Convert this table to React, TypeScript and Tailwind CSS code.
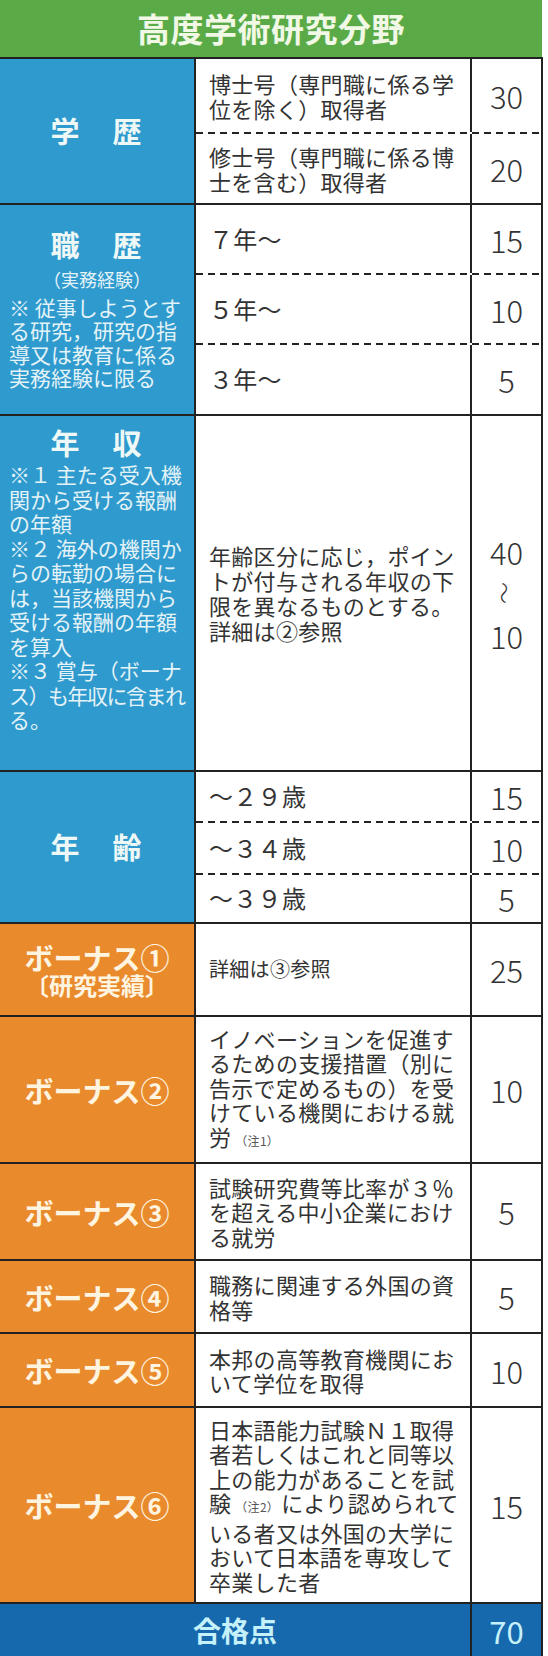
import type { ReactNode } from "react";

const font = "font-['Noto_Sans_CJK_JP','Noto_Sans_CJK_SC',sans-serif]";

// dashed divider spanning the text + points columns
function Dash() {
  return (
    <div className="h-[2px] w-full bg-[linear-gradient(to_right,#222_7px,transparent_7px)] bg-[length:12px_2px] bg-repeat-x" />
  );
}

function Cell({ h, text, size = "text-[22px]", value }: { h: string; text: ReactNode; size?: string; value: ReactNode }) {
  return (
    <div className={`flex ${h}`}>
      <div className={`w-[276px] border-r-2 border-[#222] pl-[13px] flex items-center whitespace-nowrap ${size} leading-[24.5px] tracking-[0.3px] text-[#333]`}>
        <div>{text}</div>
      </div>
      <div className="flex-1 flex items-center justify-center text-[31px] font-light text-[#333] leading-none">{value}</div>
    </div>
  );
}

function Row({ left, color, children }: { left: ReactNode; color: string; children: ReactNode }) {
  return (
    <div className="flex border-t-2 border-r-2 border-[#222] w-[543px]">
      <div className={`w-[196px] shrink-0 border-r-2 border-[#222] flex flex-col ${color}`}>{left}</div>
      <div className="flex-1 flex flex-col bg-white">{children}</div>
    </div>
  );
}

function Bonus({ n, sub }: { n: string; sub?: string }) {
  return (
    <div className="flex-1 flex flex-col items-center justify-center text-[#fff4e0] font-bold">
      <div className="text-[29px] leading-[30px]">ボーナス{n}</div>
      {sub && <div className="text-[24px] leading-[26px]">{sub}</div>}
    </div>
  );
}

const Note = ({ children }: { children: ReactNode }) => <span className="text-[12px] text-[#555] ml-[4px] mr-[2px]">{children}</span>;

export default function App() {
  return (
    <div className={`w-[548px] h-[1656px] bg-white overflow-hidden ${font}`}>
      {/* title */}
      <div className="h-[57px] w-[542px] bg-[#5aab48] flex items-center justify-center text-[33px] font-bold text-[#f1f8e6] tracking-[0.5px]">
        高度学術研究分野
      </div>

      {/* 学歴 */}
      <Row color="bg-[#2f9acd]" left={<div className="flex-1 flex items-center justify-center text-[29px] font-bold text-[#eef8f6] tracking-[2px]">学　歴</div>}>
        <Cell h="h-[73px]" size="text-[22px] leading-[23.5px]" text={<>博士号（専門職に係る学<br />位を除く）取得者</>} value="30" />
        <Dash />
        <Cell h="h-[69px]" text={<>修士号（専門職に係る博<br />士を含む）取得者</>} value="20" />
      </Row>

      {/* 職歴 */}
      <Row
        color="bg-[#2f9acd]"
        left={
          <div className="flex-1 flex flex-col justify-center pb-[4px] text-[#e4f3f8]">
            <div className="h-[38px] flex items-center justify-center text-[29px] font-bold text-[#eef8f6] tracking-[2px]">職　歴</div>
            <div className="h-[32px] flex items-center justify-center text-[18px]">（実務経験）</div>
            <div className="pl-[9px] text-[21px] leading-[23.5px] whitespace-nowrap">
              ※ 従事しようとす<br />る研究，研究の指<br />導又は教育に係る<br />実務経験に限る
            </div>
          </div>
        }
      >
        <Cell h="h-[68px]" size="text-[24px]" text="７年～" value="15" />
        <Dash />
        <Cell h="h-[68px]" size="text-[24px]" text="５年～" value="10" />
        <Dash />
        <Cell h="h-[69px]" size="text-[24px]" text="３年～" value="5" />
      </Row>

      {/* 年収 */}
      <Row
        color="bg-[#2f9acd]"
        left={
          <div className="flex-1 flex flex-col pt-[8px] text-[#e4f3f8]">
            <div className="h-[38px] flex items-center justify-center text-[29px] font-bold text-[#eef8f6] tracking-[2px]">年　収</div>
            <div className="pl-[9px] text-[21px] leading-[24.5px] whitespace-nowrap">
              ※１ 主たる受入機<br />関から受ける報酬<br />の年額<br />※２ 海外の機関か<br />らの転勤の場合に<br />は，当該機関から<br />受ける報酬の年額<br />を算入<br />※３ 賞与（ボーナ<br />
              <span className="tracking-[-1.5px]">ス）も年収に含まれ</span><br />る。
            </div>
          </div>
        }
      >
        <div className="flex h-[354px]">
          <div className="w-[276px] border-r-2 border-[#222] pl-[13px] flex items-center whitespace-nowrap text-[22px] leading-[25px] tracking-[0.3px] text-[#333]">
            <div>
              年齢区分に応じ，ポイン<br />トが付与される年収の下<br />限を異なるものとする。<br />詳細は②参照
            </div>
          </div>
          <div className="flex-1 flex flex-col items-center justify-center text-[31px] font-light text-[#333] leading-none">
            <div className="h-[42px] flex items-center">40</div>
            <div className="h-[42px] flex items-center text-[22px] rotate-90">～</div>
            <div className="h-[42px] flex items-center">10</div>
          </div>
        </div>
      </Row>

      {/* 年齢 */}
      <Row color="bg-[#2f9acd]" left={<div className="flex-1 flex items-center justify-center text-[29px] font-bold text-[#eef8f6] tracking-[2px]">年　齢</div>}>
        <Cell h="h-[49px]" size="text-[24px]" text="～２９歳" value="15" />
        <Dash />
        <Cell h="h-[50px]" size="text-[24px]" text="～３４歳" value="10" />
        <Dash />
        <Cell h="h-[47px]" size="text-[24px]" text="～３９歳" value="5" />
      </Row>

      {/* ボーナス */}
      <Row color="bg-[#e98a2c]" left={<Bonus n="①" sub="〔研究実績〕" />}>
        <Cell h="h-[91px]" size="text-[20px]" text="詳細は③参照" value="25" />
      </Row>
      <Row color="bg-[#e98a2c]" left={<Bonus n="②" />}>
        <Cell
          h="h-[145px]"
          text={<>イノベーションを促進す<br />るための支援措置（別に<br />告示で定めるもの）を受<br />けている機関における就<br />労<Note>（注1）</Note></>}
          value="10"
        />
      </Row>
      <Row color="bg-[#e98a2c]" left={<Bonus n="③" />}>
        <Cell h="h-[95px]" text={<>試験研究費等比率が３％<br />を超える中小企業におけ<br />る就労</>} value="5" />
      </Row>
      <Row color="bg-[#e98a2c]" left={<Bonus n="④" />}>
        <Cell h="h-[71px]" text={<>職務に関連する外国の資<br />格等</>} value="5" />
      </Row>
      <Row color="bg-[#e98a2c]" left={<Bonus n="⑤" />}>
        <Cell h="h-[72px]" text={<>本邦の高等教育機関にお<br />いて学位を取得</>} value="10" />
      </Row>
      <Row color="bg-[#e98a2c]" left={<Bonus n="⑥" />}>
        <Cell
          h="h-[194px]"
          text={<>日本語能力試験Ｎ１取得<br />者若しくはこれと同等以<br />上の能力があることを試<br />験<Note>（注2）</Note>により認められて<br />いる者又は外国の大学に<br />おいて日本語を専攻して<br />卒業した者</>}
          value="15"
        />
      </Row>

      {/* 合格点 */}
      <div className="flex h-[54px] w-[543px] border-t-2 border-r-2 border-[#222] bg-[#1769ae] text-[#c5f1fa]">
        <div className="w-[472px] border-r-2 border-[#222] flex items-center justify-center text-[28px] font-bold">合格点</div>
        <div className="flex-1 flex items-center justify-center text-[31px] leading-none">70</div>
      </div>
    </div>
  );
}
